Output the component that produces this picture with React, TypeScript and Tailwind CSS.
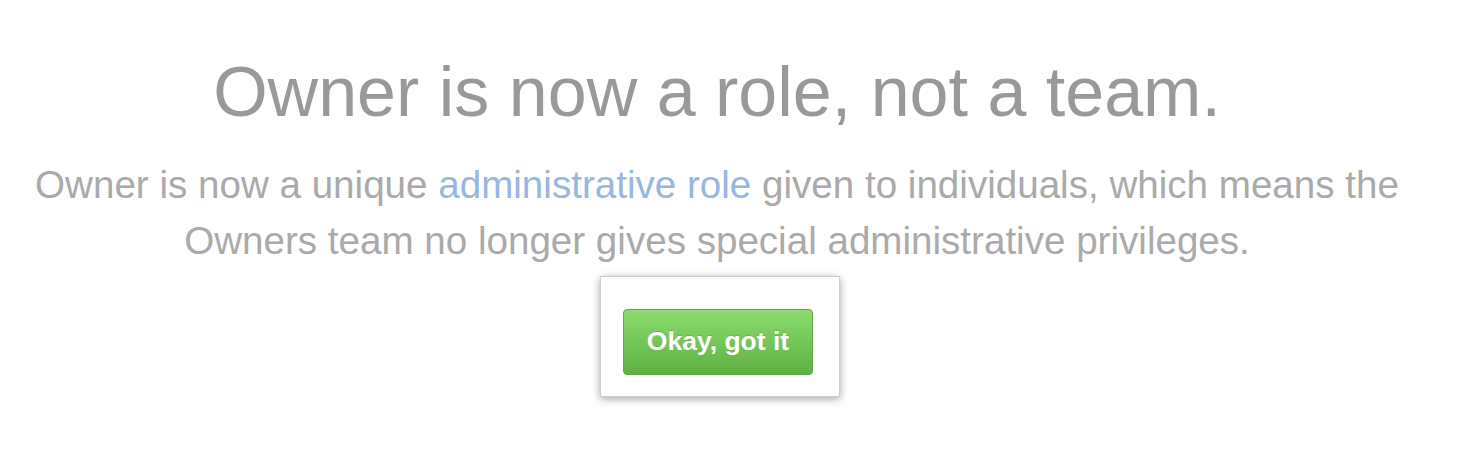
export default function App() {
  return (
    <div className="min-h-[454px] w-full bg-white font-['Liberation_Sans',Arial,sans-serif]">
      <div className="pr-[34px] pt-[52px] text-center">
        <h1 className="text-[70px] leading-[80px] font-normal text-[#999999]">
          Owner is now a role, not a team.
        </h1>
        <p className="mx-auto mt-[25px] max-w-[1410px] text-[38.6px] leading-[56px] text-[#aaaaaa]">
          Owner is now a unique{" "}
          <a href="#" className="text-[#97b6e0]">
            administrative role
          </a>{" "}
          given to individuals, which means the Owners team no longer gives special administrative privileges.
        </p>
        <div className="mt-[7px] flex justify-center pl-[6px]">
          <div className="border border-[#cfcfcf] bg-white pt-[32px] pb-[21px] pl-[22px] pr-[26px] shadow-[0_2px_8px_rgba(0,0,0,0.35)]">
            <button className="flex h-[66px] w-[190px] items-center justify-center rounded-[4px] border border-[#5ca941] bg-gradient-to-b from-[#8add6d] to-[#60b044] text-[26.5px] font-bold text-white [text-shadow:0_-1px_0_rgba(0,0,0,0.15)]">
              Okay, got it
            </button>
          </div>
        </div>
      </div>
    </div>
  );
}
